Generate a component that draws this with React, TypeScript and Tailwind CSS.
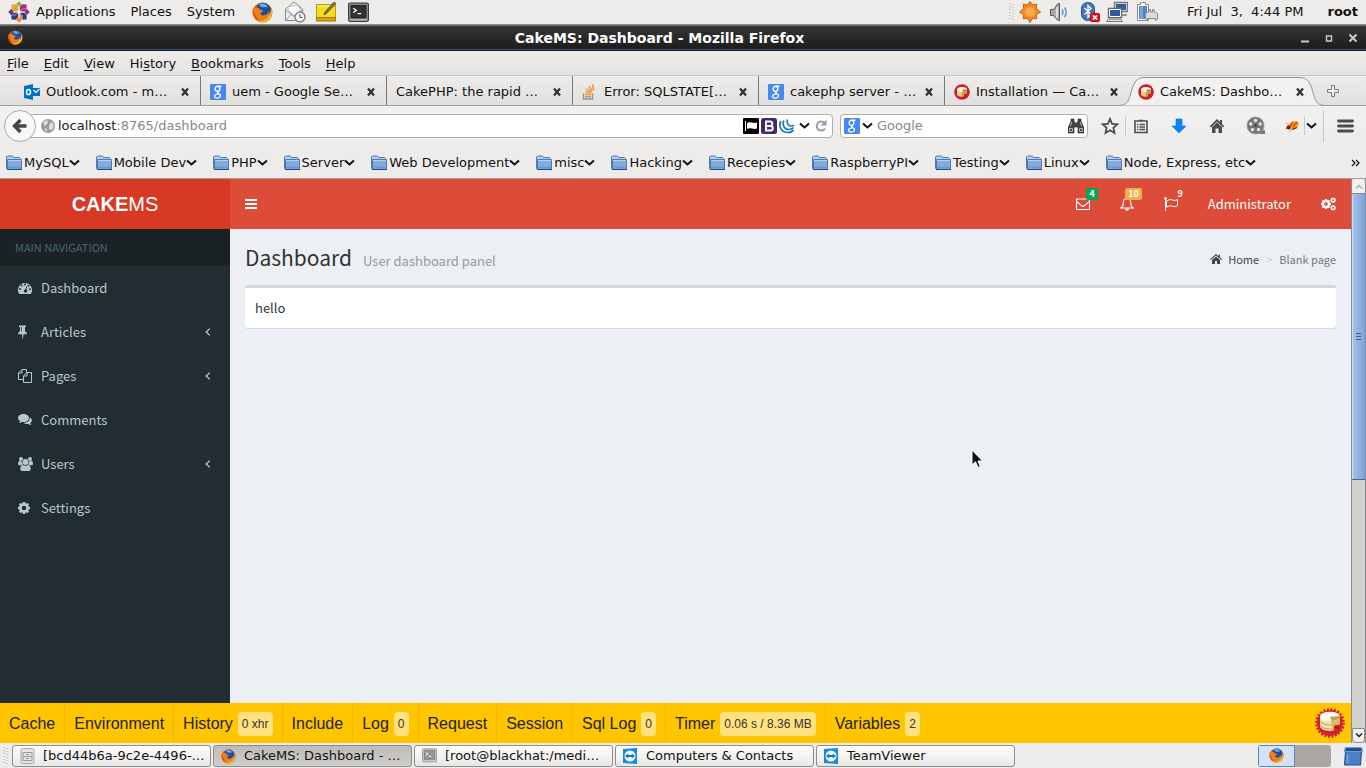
import React from "react";

type Kids = { children?: React.ReactNode };

/* ---------- shared drawings ---------- */

function Firefox({ className = "size-4" }: { className?: string }) {
  return (
    <svg viewBox="0 0 20 20" className={className} aria-hidden="true">
      <circle cx="10" cy="10" r="9.5" fill="#e2570f" />
      <path d="M10 .8c4 0 7.6 3 8 7.6.2 3-1.2 6-3.6 7.4C11 17.6 6 15 4.500 12 3 7 5 1 10 .8z" fill="#1d4f9e" />
      <path d="M7 2c3-1.500 7 0 8 3-2-1-3 .5-5 0-1.500-.4-3-1-3-3z" fill="#5fb2ea" />
      <path d="M1.200 5c.8 1 1.800.8 2.800.5C6.200 5 7.800 6 7.200 7.500 9 7.400 10.600 8 10.300 9c-.6 1-2.300 1.100-2.600 2 .6 1.600 3 2.200 4.800 1.500 2-.6 3.500-2.300 3.500-4 2 3.500-.5 9-6 9.500C4 18.500.3 14 .5 9.500.5 7.500.8 6 1.200 5z" fill="#f0801a" />
      <path d="M18.200 5.500c2.200 5-.2 11-5 13-3 1.300-7 .8-9-1 4 1.300 8.500.5 11-3 2-2.500 3-5.500 3-9z" fill="#fbc21f" />
      <path d="M1.500 6.500c0 5 2 8.500 5.500 10.500-4-.7-6.500-5-5.500-10.500z" fill="#b5320e" />
    </svg>
  );
}

function Google() {
  return (
    <svg viewBox="0 0 16 16" className="size-4 shrink-0" aria-hidden="true">
      <rect width="16" height="16" rx="1" fill="#4787f0" />
      <g fill="none" stroke="#fff" strokeWidth="1.400">
        <ellipse cx="7.500" cy="4.800" rx="2.300" ry="2.600" />
        <path d="M8 2.300h3.500M8.500 7.300C6 9 9 9.200 10 10.500c1.200 1.700 0 3.600-2.500 3.600-2.600 0-3.600-1.500-2.600-2.900.7-1 2.300-1.300 3.800-1.300" />
      </g>
    </svg>
  );
}

function Cake({ className = "size-4", scalloped = false }: { className?: string; scalloped?: boolean }) {
  if (!scalloped) {
    return (
      <svg viewBox="0 0 16 16" className={className} aria-hidden="true">
        <circle cx="8" cy="8" r="7.800" fill="#c9202f" />
        <path d="M3 5.500v5c1 1.800 3 2.500 5.500 2.300V7.500z" fill="#e6cb83" />
        <path d="M8.500 7.500v5.300l1.500-.3v-2.200l3-.8v-4z" fill="#c79c45" />
        <ellipse cx="8" cy="5.500" rx="5" ry="2.500" fill="#fff8dc" />
        <path d="M8 5.700l5-.3v1.500L9.500 8z" fill="#b8862f" />
      </svg>
    );
  }
  return (
    <svg viewBox="0 0 30 30" className={className} aria-hidden="true">
      <circle cx="15" cy="15" r="13" fill="#cf2231" />
      <circle cx="15" cy="15" r="13.500" fill="none" stroke="#cf2231" strokeWidth="2.600" strokeDasharray="2 1.530" />
      <path d="M5 8.500v10c1 3 6 4.800 12 4.300v-9z" fill="#f4e3a8" />
      <path d="M17 13v9.800l2-.3v-5l6-1V8.500z" fill="#d9b964" />
      <path d="M5 13c2 3 6 4.200 12 4M5 17c2 3 6 4.200 12 4" stroke="#c29b45" fill="none" />
      <path d="M19 19.500l5-1.500v3z" fill="#a51623" />
      <ellipse cx="15" cy="8.500" rx="10" ry="4.800" fill="#fffdf2" />
      <path d="M15 8.800l10-.8v2.500L17 13.500z" fill="#c9a04a" />
    </svg>
  );
}

function Chevron() {
  return (
    <svg viewBox="0 0 11 8" className="h-2 w-[11px] shrink-0" aria-hidden="true">
      <path d="M1 1.500l4.500 4 4.500-4" fill="none" stroke="#111" strokeWidth="2" />
    </svg>
  );
}

function Folder() {
  return (
    <svg viewBox="0 0 16 16" className="size-4 shrink-0" aria-hidden="true">
      <path d="M.5 13.500V2L1.500 1h5l1 1.500h6l1 1v10z" fill="#b5cfec" stroke="#4b7ab5" />
      <path d="M1.500 14.500v-10h14v10z" fill="#82acdd" stroke="#4b7ab5" />
      <path d="M2 5.500h13" stroke="#b9d1ee" />
      <path d="M2 12.500h13" stroke="#6c9bd1" strokeWidth="2" />
      <path d="M1 14.500h15" stroke="#204a87" />
    </svg>
  );
}

function Terminal({ className = "size-5", light = false }: { className?: string; light?: boolean }) {
  return (
    <svg viewBox="0 0 20 20" className={className} aria-hidden="true">
      <rect x=".5" y="1" width="19" height="17.500" rx="1.500" fill={light ? "#c9c9c6" : "#888a85"} stroke={light ? "#858585" : "#3b3d3a"} />
      <rect x="3" y="3.500" width="14" height="11.500" fill={light ? "#959795" : "#303331"} stroke={light ? "#777" : "#1c1e1c"} />
      <path d="M5 6l3 2-3 2M9 11h3.500" fill="none" stroke="#fff" strokeWidth="1.200" />
      <path d="M2 17h16" stroke="#ccc" />
    </svg>
  );
}

function Grip() {
  return (
    <svg viewBox="0 0 6 18" className="h-[18px] w-1.5 shrink-0" aria-hidden="true">
      <path d="M1 0v18M4 1v17" stroke="#aaa8a5" strokeWidth="1" strokeDasharray="1 2" />
    </svg>
  );
}

/* ---------- desktop panel ---------- */

function PanelLogo() {
  const petals = [0, 45, 90, 135, 180, 225, 270, 315];
  const colors = ["#8db73b", "#9b2d84", "#9b2d84", "#24407f", "#f08a24", "#24407f", "#5b3b8f", "#e7a51f"];
  return (
    <svg viewBox="0 0 22 22" className="size-[22px]" aria-hidden="true">
      {petals.map((a, i) => (
        <path key={a} d="M11 0l3.200 3v4.500L11 9.800 7.800 7.500V3z" fill={colors[i]} stroke="#fff" strokeWidth=".4" transform={`rotate(${a} 11 11)`} />
      ))}
      <path d="M11 5v12M5 11h12" stroke="#fff" strokeWidth="1" />
    </svg>
  );
}

function DesktopPanel() {
  return (
    <header className="flex h-[25px] shrink-0 items-center border-b border-[#8d8b87] bg-[#edeceb] px-2 text-[13px] leading-6">
      <nav className="flex items-center" aria-label="Desktop">
        <PanelLogo />
        <div className="ml-1.5 flex gap-[15px]">
          <button>Applications</button>
          <button>Places</button>
          <button>System</button>
        </div>
      </nav>
      <div className="ml-[17px] flex items-center gap-[11px]">
        <button aria-label="Firefox"><Firefox className="size-[21px]" /></button>
        <button aria-label="Mail">
          <svg viewBox="0 0 22 22" className="size-[22px]">
            <path d="M1.500 8L10 1l8.500 7v11.500h-17z" fill="#eee" stroke="#888a85" />
            <path d="M4 9V6l9-2 3 3v4l-6 4z" fill="#fff" stroke="#babdb6" />
            <path d="M1.500 19.500l6-6.500M1.500 8.500l8 7 9-7" fill="none" stroke="#999" />
            <circle cx="16" cy="16" r="5" fill="#f4f0f6" stroke="#8d7b9b" strokeWidth="1.500" />
            <path d="M16 13v3.500h2.500" fill="none" stroke="#555" />
          </svg>
        </button>
        <button aria-label="Notes" className="-ml-0.5">
          <svg viewBox="0 0 22 22" className="size-[22px]">
            <path d="M1.500 3.500h19v16h-19z" fill="#f5dc24" stroke="#c49b06" />
            <path d="M1.500 16.500h19v3.500h-19z" fill="#d8a70a" stroke="#a57706" />
            <path d="M3 5h16" stroke="#fff08a" />
            <path d="M9 14l1-3 9-10 2 1.500-9 9.500z" fill="#7d7544" stroke="#46401d" strokeWidth=".7" />
          </svg>
        </button>
        <button aria-label="Terminal"><Terminal className="size-[21px]" /></button>
      </div>
      <div className="ml-auto flex items-center">
        <Grip />
        <svg viewBox="0 0 22 22" className="ml-1 size-[22px]" aria-label="Updates">
          <path d="M11 .5l2.600 3.300 4.200-.6-.6 4.200L21.500 11l-4.300 2.600.6 4.200-4.200-.6L11 21.500l-2.600-4.300-4.200.6.6-4.200L.5 11l4.300-3.600-.6-4.200 4.200.6z" fill="#f28b1f" stroke="#cf5e06" />
          <circle cx="11" cy="11" r="5" fill="#f9a94a" />
        </svg>
        <svg viewBox="0 0 20 20" className="ml-2 size-5" aria-label="Volume">
          <path d="M1.500 7.500h3l4.500-6h1.500v17H9l-4.500-5h-3z" fill="#a9aba8" stroke="#555753" />
          <path d="M8 5v11" stroke="#eee" strokeWidth="1.500" />
          <path d="M13 7.500q2 2.500 0 5.500M15.500 5.500q3.500 4.500 0 9.500" fill="none" stroke="#6f93c4" strokeWidth="1.500" />
        </svg>
        <svg viewBox="0 0 20 20" className="ml-[11px] size-5" aria-label="Bluetooth">
          <rect x="1.500" y=".5" width="13" height="18" rx="6" fill="#4676b5" stroke="#27548f" />
          <path d="M4.500 6l6.500 6.500-3 3v-12l3 3-6.500 6" fill="none" stroke="#fff" strokeWidth="1.300" />
          <rect x="10.500" y="11.500" width="9" height="8" rx="1" fill="#e01b24" stroke="#b40808" />
          <path d="M13 13.500l4 4M17 13.500l-4 4" stroke="#fff" strokeWidth="1.700" />
        </svg>
        <svg viewBox="0 0 22 22" className="ml-1.5 size-[22px]" aria-label="Network">
          <path d="M8.500 1.500h13v9h-13zM12 14h9M15 11v3" fill="#315da0" stroke="#777974" strokeWidth="1.400" />
          <path d="M9.500 2.500h11v7h-11z" fill="#315da0" stroke="#fff" strokeWidth=".7" />
          <path d="M2.500 7.500h13v9h-13z" fill="#315da0" stroke="#666863" strokeWidth="1.400" />
          <path d="M3.500 8.500h11v7h-11z" fill="#315da0" stroke="#fff" />
          <path d="M.5 20.500h16l-2-2.500h-12z" fill="#ddd" stroke="#777" />
        </svg>
        <svg viewBox="0 0 22 22" className="ml-2 size-[22px]" aria-label="Battery">
          <path d="M1.500 3.500h3v-2h5v2h3v16h-11z" fill="#fff" stroke="#888a85" />
          <path d="M3 5h8v13H3z" fill="#4e83c6" />
          <path d="M4 5h3v13H4z" fill="#78a6df" />
          <path d="M9.500 18v-5l2-2h1.500V8.500h1.500V11h2V8.500H18V11h1.500l2 2v5l-2 1.500v-2h-8v2z" fill="#ddd" stroke="#858785" />
        </svg>
        <time className="ml-[29px] whitespace-pre">Fri Jul  3,  4:44 PM</time>
        <button className="ml-6 font-bold">root</button>
      </div>
    </header>
  );
}

/* ---------- browser chrome ---------- */

function TitleBar() {
  return (
    <div className="flex h-[26px] shrink-0 items-center border-b border-[#101722] bg-linear-to-b from-[#373737] to-[#1c1c1c] pr-2 pl-2 text-white shadow-[inset_0_1px_0_#6b6b6b,inset_0_-1px_0_#41597a]">
      <Firefox className="size-[15px]" />
      <h1 className="flex-1 pr-1 text-center text-[14px] leading-6 font-bold">CakeMS: Dashboard - Mozilla Firefox</h1>
      <div className="flex gap-[14px]">
        <button aria-label="Minimize" className="size-2.5">
          <svg viewBox="0 0 10 10"><path d="M1 8.500h8" stroke="#ccc" strokeWidth="2" /></svg>
        </button>
        <button aria-label="Maximize" className="size-2.5">
          <svg viewBox="0 0 10 10"><path d="M2.500 3h5v5h-5zM2 3h6" fill="none" stroke="#ccc" strokeWidth="1.400" /></svg>
        </button>
        <button aria-label="Close" className="size-2.5">
          <svg viewBox="0 0 10 10"><path d="M1.500 1.500l7 7M8.500 1.500l-7 7" stroke="#ccc" strokeWidth="2" /></svg>
        </button>
      </div>
    </div>
  );
}

const menus = [
  ["", "F", "ile"],
  ["", "E", "dit"],
  ["", "V", "iew"],
  ["Hi", "s", "tory"],
  ["", "B", "ookmarks"],
  ["", "T", "ools"],
  ["", "H", "elp"],
];

function MenuBar() {
  return (
    <nav aria-label="Menu" className="flex h-[25px] shrink-0 items-center gap-[15px] border-b border-[#c6c5c3] bg-linear-to-b from-[#eeedec] to-[#e4e3e1] pt-px pl-[7px] text-[13px] leading-6">
      {menus.map(([a, b, c]) => (
        <button key={b}>{a}<span className="underline underline-offset-2">{b}</span>{c}</button>
      ))}
    </nav>
  );
}

function Outlook() {
  return (
    <svg viewBox="0 0 16 16" className="size-4 shrink-0" aria-hidden="true">
      <path d="M8 4h8v8H8z" fill="#0072c6" />
      <path d="M9.500 6l2.500 2.500L15.500 5" fill="none" stroke="#fff" strokeWidth="1.200" />
      <path d="M0 2l9-2v16l-9-2z" fill="#0072c6" />
      <ellipse cx="4.500" cy="8" rx="2" ry="2.600" fill="none" stroke="#fff" strokeWidth="1.500" />
    </svg>
  );
}

function StackOverflow() {
  return (
    <svg viewBox="0 0 16 16" className="size-4 shrink-0" aria-hidden="true">
      <path d="M1.500 9.500v5.500h9V9.500" fill="none" stroke="#919497" strokeWidth="1.400" />
      <path d="M3 12.800h6" stroke="#919497" strokeWidth="1.300" />
      <path d="M3 10.300l6 .6M3.300 7.600l5.800 1.600M4.500 4.900l5 3M7 2.300l3.500 4.600M10.500.5l1.200 5.700" stroke="#f08a24" strokeWidth="1.400" />
    </svg>
  );
}

function CloseMark() {
  return (
    <svg viewBox="0 0 10 10" className="size-[10px]" aria-hidden="true">
      <path d="M2 1.500l6 7M8 1.500l-6 7" stroke="#333" strokeWidth="2.300" />
    </svg>
  );
}

const tabs: { title: string; icon?: React.ReactNode }[] = [
  { title: "Outlook.com - m…", icon: <Outlook /> },
  { title: "uem - Google Se…", icon: <Google /> },
  { title: "CakePHP: the rapid …" },
  { title: "Error: SQLSTATE[…", icon: <StackOverflow /> },
  { title: "cakephp server - …", icon: <Google /> },
  { title: "Installation — Ca…", icon: <Cake className="size-4 shrink-0" /> },
];

function TabBar() {
  return (
    <div className="flex h-[30px] shrink-0 border-b border-[#a3a19e] bg-linear-to-b from-[#eeedec] to-[#e1e0de] pl-[15px] text-[13px] leading-5">
      {tabs.map((t, i) => (
        <div key={t.title} className={`flex w-[186px] items-center gap-1.5 pt-0.5 pl-[9px] ${i < 5 ? "border-r border-[#777] pr-[10px]" : "pr-3"}`}>
          {t.icon}
          <button className="flex-1 text-left whitespace-nowrap">{t.title}</button>
          <button aria-label={`Close ${t.title}`}><CloseMark /></button>
        </div>
      ))}
      <div className="relative -mr-2 -mb-px -ml-3 flex w-[206px] items-center">
        <svg viewBox="0 0 206 30" preserveAspectRatio="none" className="absolute inset-0 size-full" aria-hidden="true">
          <path d="M0 29.500c9 0 10-6 12-13C15 6 17 1.500 26 1.500h154c9 0 11 4.500 14 15 2 7 3 13 12 13" fill="#f2f1f0" stroke="#97958f" />
        </svg>
        <div className="relative flex w-full items-center gap-1.5 pt-px pr-5 pl-[19px]">
          <Cake className="size-4 shrink-0" />
          <button className="flex-1 text-left whitespace-nowrap">CakeMS: Dashbo…</button>
          <button aria-label="Close CakeMS: Dashboard"><CloseMark /></button>
        </div>
      </div>
      <button aria-label="New tab" className="ml-2.5 self-center">
        <svg viewBox="0 0 12 12" className="size-3"><path d="M4.500.5h3v4h4v3h-4v4h-3v-4h-4v-3h4z" fill="#eee" stroke="#777" /></svg>
      </button>
    </div>
  );
}

function NavBar() {
  return (
    <div className="flex h-10 shrink-0 items-center bg-linear-to-b from-[#f2f1f0] to-[#edeceb] pr-3 pl-1 text-[13px]">
      <button aria-label="Back" className="z-10 flex size-8 shrink-0 items-center justify-center rounded-full border border-[#a5a9ae] bg-[#f8f8f8]">
        <svg viewBox="0 0 16 16" className="size-4"><path d="M14.500 8H4M8.500 2L2.500 8l6 6" fill="none" stroke="#444" strokeWidth="3.400" /></svg>
      </button>
      <div className="-ml-3 flex h-6 min-w-0 flex-1 items-center rounded-r-sm border border-[#b1afac] bg-white pr-1 pl-4">
        <svg viewBox="0 0 14 14" className="size-[14px] shrink-0" aria-hidden="true">
          <circle cx="7" cy="7" r="7" fill="#9b9b9b" />
          <path d="M2 3l4-2 1 3-3 3zM8 6l3-3 2 4-2 4-3-1zM3 9l3 1v3z" fill="#dedede" />
        </svg>
        <div className="relative ml-[3px] min-w-0 flex-1 leading-6">
          <input aria-label="Address" defaultValue="localhost:8765/dashboard" className="w-full bg-transparent text-transparent outline-none" />
          <span aria-hidden="true" className="pointer-events-none absolute inset-0 text-[#888]"><span className="text-[#222]">localhost</span>:8765/dashboard</span>
        </div>
        <svg viewBox="0 0 16 16" className="size-4 shrink-0" aria-hidden="true">
          <rect width="16" height="16" rx="1" fill="#000" />
          <path d="M2.500 3v10" stroke="#fff" />
          <path d="M4 5c3-2 6 1 10-.500v6c-4 1.500-7-1.500-10 .5z" fill="#fff" />
        </svg>
        <svg viewBox="0 0 16 16" className="ml-0.5 size-4 shrink-0" aria-hidden="true">
          <rect width="16" height="16" rx="2.500" fill="#412a66" />
          <path d="M5 3.500h4q2.300 0 2.300 2.200T9 7.900H5zM5 7.900h4.300q2.500 0 2.500 2.300T9.300 12.500H5zM5 3v10" fill="none" stroke="#fff" strokeWidth="2" />
        </svg>
        <svg viewBox="0 0 16 16" className="ml-0.5 size-4 shrink-0" aria-hidden="true">
          <path d="M2 3C-1 8 2.500 14.500 8.500 14.500c3 0 5-1 6-2.500M5 2.500C3 6 5 11.500 9.500 11.500c2.500 0 4-.8 5-2M8.500 1.500c-1 3 .5 6.300 3.500 6.500 1.500.1 2.500-.5 3-1" fill="none" stroke="#1c76bd" strokeWidth="1.700" />
        </svg>
        <button aria-label="More site tools" className="ml-1"><Chevron /></button>
        <button aria-label="Reload" className="ml-1">
          <svg viewBox="0 0 14 14" className="size-[14px]">
            <path d="M11 9.500A4.500 4.500 0 1 1 10.500 4" fill="none" stroke="#919da8" strokeWidth="2" />
            <path d="M12.500.5v6h-6z" fill="#919da8" />
          </svg>
        </button>
      </div>
      <div className="ml-[7px] flex h-6 w-[248px] shrink-0 items-center rounded-sm border border-[#b1afac] bg-white px-[3px]">
        <Google />
        <button aria-label="Choose search engine" className="ml-0.5"><Chevron /></button>
        <input aria-label="Search" placeholder="Google" className="ml-1 min-w-0 flex-1 bg-transparent leading-6 outline-none placeholder:text-[#888]" />
        <svg viewBox="0 0 16 16" className="size-4 shrink-0" aria-hidden="true">
          <path d="M3 1h3v2l1 2h2l1-2V1h3v2l3 7v5h-6V9H6v6H0v-5l3-7z" fill="#444" stroke="#222" strokeWidth=".6" />
          <path d="M1.500 10.500h3v3h-3zM11.500 10.500h3v3h-3zM3.500 4l-1 4M12.500 4l1 4" stroke="#bbb" fill="none" />
        </svg>
      </div>
      <div className="ml-[13px] flex shrink-0 items-center">
        <button aria-label="Bookmark this page">
          <svg viewBox="0 0 18 18" className="size-[18px]"><path d="M9 2l2.100 4.800 5.200.5-3.900 3.500 1.100 5.200L9 13.300 4.500 16l1.100-5.200-3.900-3.500 5.200-.5z" fill="none" stroke="#4c4c4c" strokeWidth="1.800" /></svg>
        </button>
        <span className="ml-1.5 h-[18px] w-px bg-[#c4c8cc]" />
        <button aria-label="Bookmarks menu" className="ml-[7px]">
          <svg viewBox="0 0 16 16" className="size-4"><path d="M2 3h12v11.500H2zM6 2.500h4M6.500 6.500H12M6.500 9H12M6.500 11.500H12M4 6.500h1.300M4 9h1.300M4 11.500h1.300" fill="none" stroke="#4c4c4c" strokeWidth="1.600" /></svg>
        </button>
        <button aria-label="Downloads" className="ml-[22px]">
          <svg viewBox="0 0 16 16" className="size-4"><path d="M5 1h6v7h4l-7 7-7-7h4z" fill="#0a84ff" stroke="#0874df" strokeWidth=".6" /></svg>
        </button>
        <button aria-label="Home" className="ml-[22px]">
          <svg viewBox="0 0 16 16" className="size-4"><path d="M8 1L.8 8.200 2 9.400l6-6 6 6 1.200-1.200-2.200-2.200V2h-2v2z" fill="#4c4c4c" /><path d="M3 9.300l5-5 5 5V15h-3.500v-4.500h-3V15H3z" fill="#4c4c4c" /></svg>
        </button>
        <button aria-label="Video" className="ml-[21px]">
          <svg viewBox="0 0 20 20" className="size-5">
            <path d="M11 18l4-4 4 .5V18z" fill="#777" />
            <circle cx="9.500" cy="9.500" r="8.500" fill="#777" stroke="#999" />
            <g fill="#e0e0e0" stroke="#444" strokeWidth=".5"><circle cx="9.500" cy="4.500" r="2.200" /><circle cx="14.200" cy="8" r="2.200" /><circle cx="12.500" cy="13.600" r="2.200" /><circle cx="6.500" cy="13.600" r="2.200" /><circle cx="4.800" cy="8" r="2.200" /></g>
            <circle cx="9.500" cy="9.500" r="1.200" fill="#333" />
          </svg>
        </button>
        <button aria-label="Firebug" className="ml-[18px]">
          <svg viewBox="0 0 16 14" className="h-[14px] w-4">
            <path d="M2 4l3 2M1 10l4-1M6 13l1-3M9 2L7 5" stroke="#d0a16a" />
            <ellipse cx="9.500" cy="6" rx="5.500" ry="3.500" fill="#f39c12" transform="rotate(-22 9.500 6)" />
            <path d="M6 8l3-5M9 8l4-5" stroke="#d2460b" strokeWidth="1.300" />
            <circle cx="4.500" cy="8.500" r="2" fill="#6b1e08" />
            <path d="M8 10.500l5-2" stroke="#5b2208" strokeWidth="1.200" />
          </svg>
        </button>
        <span className="ml-1 h-[18px] w-px bg-[#c4c8cc]" />
        <button aria-label="Firebug options" className="ml-px"><Chevron /></button>
        <span className="ml-1.5 h-8 w-px bg-[#c4c8cc]" />
        <button aria-label="Open menu" className="ml-[13px]">
          <svg viewBox="0 0 17 14" className="h-[14px] w-[17px]"><path d="M1.500 2h14M1.500 7h14M1.500 12h14" stroke="#4c4c4c" strokeWidth="2.800" strokeLinecap="round" /></svg>
        </button>
      </div>
    </div>
  );
}

const bookmarks = ["MySQL", "Mobile Dev", "PHP", "Server", "Web Development", "misc", "Hacking", "Recepies", "RaspberryPI", "Testing", "Linux", "Node, Express, etc"];

function BookmarkBar() {
  return (
    <nav aria-label="Bookmarks" className="flex h-[33px] shrink-0 items-center gap-4 border-b border-[#a09e9b] bg-[#edeceb] pt-px pr-1.5 pl-1.5 text-[13px] leading-5">
      {bookmarks.map((b) => (
        <button key={b} className="flex items-center whitespace-nowrap">
          <Folder />
          <span className="ml-0.5">{b}</span>
          <Chevron />
        </button>
      ))}
      <button aria-label="More bookmarks" className="ml-auto">
        <svg viewBox="0 0 9 8" className="h-2 w-[9px]"><path d="M1 1l3 3-3 3M5 1l3 3-3 3" fill="none" stroke="#111" strokeWidth="1.200" /></svg>
      </button>
    </nav>
  );
}

/* ---------- dashboard page ---------- */

function Glyph({ w = 14, children }: Kids & { w?: number }) {
  return (
    <svg viewBox={`0 0 ${w} 14`} style={{ width: w }} className="h-[14px] shrink-0" fill="currentColor" aria-hidden="true">
      {children}
    </svg>
  );
}

function Gear({ cx, cy, r }: { cx: number; cy: number; r: number }) {
  const teeth = [0, 45, 90, 135];
  return (
    <g stroke="currentColor" fill="none">
      <circle cx={cx} cy={cy} r={r * 0.6} strokeWidth={r * 0.46} />
      {teeth.map((a) => (
        <path
          key={a}
          d={`M${cx} ${cy - r}V${cy - r * 0.6}M${cx} ${cy + r * 0.6}V${cy + r}`}
          strokeWidth={r * 0.42}
          transform={`rotate(${a} ${cx} ${cy})`}
        />
      ))}
    </g>
  );
}

const navItems: { label: string; icon: React.ReactNode; open?: boolean }[] = [
  {
    label: "Dashboard",
    icon: (
      <Glyph>
        <path fillRule="evenodd" d="M7 2a7 7 0 0 0-5.900 10.800q.2.300.5.300h10.800q.3 0 .5-.3A7 7 0 0 0 7 2zM3 8a1 1 0 1 1-2 0 1 1 0 0 1 2 0zm1.500-3.500a1 1 0 1 1-2 0 1 1 0 0 1 2 0zM8 3.500a1 1 0 1 1-2 0 1 1 0 0 1 2 0zm3.500 1.200a1 1 0 1 1-2 0 1 1 0 0 1 2 0zM13 8.300a1 1 0 1 1-2 0 1 1 0 0 1 2 0zM8.500 5.200l.6.200-.8 3.200a1.600 1.600 0 1 1-1-.2z" />
      </Glyph>
    ),
  },
  {
    label: "Articles",
    open: true,
    icon: (
      <Glyph>
        <path fillRule="evenodd" d="M1 .5h7V2H7v4q2 1.300 2 3.200H5.500l-.6 4.800h-.4l-.5-4.800H0Q0 7.300 2 6V2H1zM3 2.200v4h.8v-4z" />
      </Glyph>
    ),
  },
  {
    label: "Pages",
    open: true,
    icon: (
      <Glyph>
        <path d="M5 10.500H.5V4L4 .5h4.500V3.500M4 .5V4H.5M5.500 6.800L9 3.500h4.500v10h-8zM9 3.500V7H5.500" fill="none" stroke="currentColor" />
      </Glyph>
    ),
  },
  {
    label: "Comments",
    icon: (
      <Glyph>
        <path d="M5.500 1C8.700 1 11 2.800 11 5S8.700 9 5.500 9q-.8 0-1.500-.1Q2.700 10 1 10q.9-.8 1-1.900Q0 7 0 5c0-2.200 2.300-4 5.500-4z" />
        <path d="M11.800 4.200C14.300 5.700 14.700 8.200 12.300 9.900q.1 1.100 1 2-1.800 0-3-1-2.800.4-5-1C9 9.900 12 8 11.800 4.200z" />
      </Glyph>
    ),
  },
  {
    label: "Users",
    open: true,
    icon: (
      <Glyph w={15}>
        <circle cx="3" cy="2" r="2" /><circle cx="12" cy="2" r="2" /><circle cx="7.500" cy="5" r="2.900" />
        <path d="M1.400 3.800q2 1 2.800.4-.2 2 .8 3.300-1.500 0-2.200.8H1.400Q0 8.300 0 7q0-3 1.400-3.200zM13.600 3.800q-2 1-2.800.4.2 2-.8 3.300 1.500 0 2.200.8h1.400Q15 8.300 15 7q0-3-1.400-3.200zM4.500 7.700q3 2.200 6 0 2.200.5 2.200 4.500 0 1.800-1.800 1.800H4.100q-1.800 0-1.800-1.800 0-4 2.200-4.500z" />
      </Glyph>
    ),
  },
  { label: "Settings", icon: <Glyph><Gear cx={6} cy={7} r={6} /></Glyph> },
];

function Sidebar() {
  return (
    <aside className="w-[230px] shrink-0 bg-[#222d32]">
      <h2 className="h-[37px] bg-[#1a2226] pl-[15px] text-[11px] leading-[37px] text-[#4b646f]">MAIN NAVIGATION</h2>
      <nav aria-label="Main navigation">
        {navItems.map((n) => (
          <a key={n.label} href="#" className="flex h-11 items-center pr-[19px] pl-[18px] text-[13px] text-[#b8c7ce]">
            <span className="flex w-[23px]">{n.icon}</span>
            <span className="flex-1">{n.label}</span>
            {n.open && (
              <svg viewBox="0 0 6 8" className="h-2 w-1.5" aria-hidden="true"><path d="M4.800.6L1.200 4l3.600 3.400" fill="none" stroke="currentColor" strokeWidth="1.300" /></svg>
            )}
          </a>
        ))}
      </nav>
    </aside>
  );
}

function Alert({ label, count, tone, children }: Kids & { label: string; count: string; tone: string }) {
  return (
    <button aria-label={label} className="relative flex h-full w-11 items-center justify-center">
      {children}
      <span className={`absolute top-[9px] right-[7px] rounded-xs px-[3px] text-[9px] leading-[12px] font-bold text-white ${tone}`}>{count}</span>
    </button>
  );
}

function AppHeader() {
  return (
    <div className="flex h-[50px] shrink-0 bg-[#dd4b39] text-white">
      <a href="#" className="w-[230px] shrink-0 bg-[#d73925] text-center font-[family-name:Liberation_Sans,sans-serif] text-[20px] leading-[50px]"><b>CAKE</b>MS</a>
      <button aria-label="Toggle navigation" className="pl-[15px]">
        <svg viewBox="0 0 12 10" className="h-2.5 w-3"><path d="M0 1h12M0 5h12M0 9h12" stroke="#fff" strokeWidth="2" /></svg>
      </button>
      <div className="ml-auto flex items-center pr-[15px] text-[13px]">
        <Alert label="Messages" count="4" tone="bg-[#00a65a]">
          <Glyph><path d="M.5 2h13v10.500H.5zM.5 4.500L6 9q1 .8 2 0l5.500-4.500" fill="none" stroke="currentColor" strokeWidth="1.100" /></Glyph>
        </Alert>
        <Alert label="Notifications" count="10" tone="bg-[#f0ad4e]">
          <Glyph><path d="M7 1.500c-2.600 0-3.700 1.700-3.700 4 0 3-1 4.500-2.500 5.500h12.400c-1.500-1-2.500-2.500-2.500-5.500 0-2.300-1.100-4-3.700-4zM7 0v1.500" fill="none" stroke="currentColor" strokeWidth="1.100" /><path d="M5 11.500h4q-.2 2.200-2 2.200t-2-2.200z" /></Glyph>
        </Alert>
        <Alert label="Tasks" count="9" tone="">
          <Glyph><path d="M1.500 1v13" stroke="currentColor" /><path d="M2.500 4C6 2 7.500 2.500 9 3.200c1.500.6 3 .1 4.500-.7v6.200c-1.500.8-3 1.300-4.500.7-1.500-.7-3-1.200-6.500.8z" fill="none" stroke="currentColor" /><circle cx="1.500" cy="1.500" r="1.300" /></Glyph>
        </Alert>
        <button className="ml-[15px]">Administrator</button>
        <button aria-label="Control panel" className="ml-[30px]">
          <Glyph w={15}>
            <Gear cx={5} cy={7} r={5} />
            <Gear cx={12.200} cy={3.200} r={2.800} />
            <Gear cx={12.200} cy={10.800} r={2.800} />
          </Glyph>
        </button>
      </div>
    </div>
  );
}

function MainContent() {
  return (
    <main className="relative min-w-0 flex-1 bg-[#ecf0f5] px-[15px] text-[#333]">
      <div className="flex h-14 items-center justify-between">
        <h2 className="flex items-baseline gap-[11px] text-[21px] leading-7">
          Dashboard <small className="text-[13px] leading-none text-[#999]">User dashboard panel</small>
        </h2>
        <nav aria-label="Breadcrumb" className="flex items-center pt-1 text-[11px] leading-6 text-[#777]">
          <svg viewBox="0 0 12 10" className="mr-1.5 h-2.5 w-3" fill="#444" aria-hidden="true">
            <path d="M6 0l2.500 2.200V.8H10v2.700l2 1.700-.7.8L6 1.500.7 6 0 5.200z" /><path d="M6 2.500L10 6v4H7V7H5v3H2V6z" />
          </svg>
          <a href="#" className="text-[#444]">Home</a>
          <span className="px-[7px] text-[#ccc]">&gt;</span>
          <span>Blank page</span>
        </nav>
      </div>
      <section className="rounded-[3px] border-t-[3px] border-[#d2d6de] bg-white p-2.5 text-[13px] leading-5 shadow-[0_1px_1px_rgba(0,0,0,0.1)]">hello</section>
      <svg viewBox="0 0 12 20" className="pointer-events-none absolute top-[220px] left-[741px] h-5 w-3" aria-hidden="true">
        <path d="M1 1v15l3.500-3.200L7 18.500l2.300-1L7 12h4.500z" fill="#111" stroke="#fff" />
      </svg>
    </main>
  );
}

const debugItems: [string, string?][] = [
  ["Cache"], ["Environment"], ["History", "0 xhr"], ["Include"], ["Log", "0"], ["Request"], ["Session"], ["Sql Log", "0"], ["Timer", "0.06 s / 8.36 MB"], ["Variables", "2"],
];

function DebugBar() {
  return (
    <div className="flex h-10 shrink-0 items-center bg-[#ffc600] pr-1.5 font-[family-name:Liberation_Sans,sans-serif] text-[16px] text-[#222]">
      {debugItems.map(([name, value], i) => (
        <button key={name} className={`flex h-full items-center gap-[5px] px-[9px] pt-0.5 whitespace-nowrap ${i < 9 ? "border-r border-[#f6b700]" : ""}`}>
          {name}
          {value && <span className="rounded bg-[#ffe180] px-1 text-[12px] leading-6 text-[#333]">{value}</span>}
        </button>
      ))}
      <button aria-label="Close toolbar" className="ml-auto"><Cake className="size-[30px]" scalloped /></button>
    </div>
  );
}

function ScrollBar() {
  return (
    <div aria-hidden="true" className="flex w-[15px] shrink-0 flex-col border-x border-[#8c8b89] bg-[#d3d1cf]">
      <div className="flex h-[15px] shrink-0 items-center justify-center rounded-t-sm border-b border-[#8c8b89] bg-[#f1f0ef]">
        <svg viewBox="0 0 8 5" className="h-[5px] w-2"><path d="M1 4.500l3-3 3 3" fill="none" stroke="#aaa" strokeWidth="1.300" /></svg>
      </div>
      <div className="flex h-[286px] flex-col items-center justify-center gap-0.5 border-b border-[#3d6ca3] bg-linear-to-r from-[#a5c4ea] to-[#79a3d8] shadow-[inset_1px_0_0_#c8dcf3]">
        <i className="h-px w-[5px] bg-[#3b6495]" /><i className="h-px w-[5px] bg-[#3b6495]" /><i className="h-px w-[5px] bg-[#3b6495]" />
      </div>
      <div className="mt-auto flex h-[15px] shrink-0 items-center justify-center rounded-b-sm border border-[#8c8b89] bg-[#f1f0ef]">
        <svg viewBox="0 0 8 5" className="h-[5px] w-2"><path d="M1 .5l3 3 3-3" fill="none" stroke="#222" strokeWidth="1.500" /></svg>
      </div>
    </div>
  );
}

/* ---------- taskbar ---------- */

function TeamViewer() {
  return (
    <svg viewBox="0 0 15 16" className="h-4 w-[15px] shrink-0" aria-hidden="true">
      <path d="M0 1l14-1v16L0 15z" fill="#128be3" />
      <circle cx="7" cy="8" r="5.500" fill="#fff" />
      <path d="M1.800 8l3.500-2.500V7h3.400V5.500L12.200 8l-3.500 2.500V9H5.300v1.500z" fill="#0e79d0" />
    </svg>
  );
}

function FileCabinet() {
  return (
    <svg viewBox="0 0 15 16" className="h-4 w-[15px] shrink-0" aria-hidden="true">
      <rect x="1" y=".5" width="13" height="15" rx="1.500" fill="#e4e4e2" stroke="#aaa" />
      <path d="M3 4.500h9v4H3zM3 8.500h9v4H3zM6 6.500h3M6 10.500h3" fill="none" stroke="#999" />
    </svg>
  );
}

const tasks: { label: string; icon: React.ReactNode; active?: boolean }[] = [
  { label: "[bcd44b6a-9c2e-4496-…", icon: <FileCabinet /> },
  { label: "CakeMS: Dashboard - …", icon: <Firefox className="size-[15px] shrink-0" />, active: true },
  { label: "[root@blackhat:/medi…", icon: <Terminal className="size-[15px] shrink-0" light /> },
  { label: "Computers & Contacts", icon: <TeamViewer /> },
  { label: "TeamViewer", icon: <TeamViewer /> },
];

function TaskBar() {
  return (
    <footer className="flex h-[25px] shrink-0 items-center bg-[#edeceb] pl-[3px] text-[13px] leading-5">
      <Grip />
      <div className="ml-[3px] flex min-w-0 flex-1 gap-0.5">
        {tasks.map((t) => (
          <button
            key={t.label}
            className={`flex h-[22px] w-[199px] items-center gap-2 rounded-[3px] border border-[#8f8d8a] pl-[7px] whitespace-nowrap ${t.active ? "bg-linear-to-b from-[#bebbb8] to-[#cfcdca] pt-px" : "bg-linear-to-b from-white to-[#e8e7e5]"}`}
          >
            {t.icon}
            {t.label}
          </button>
        ))}
      </div>
      <div className="mr-3 flex h-[22px] w-[73px] overflow-hidden rounded-[3px] bg-[#aaa7a4]" aria-label="Workspaces">
        <button aria-label="Workspace 1" className="flex w-[37px] items-center justify-center border border-[#5c86bd] bg-[#d2e2f7]"><Firefox className="size-[15px]" /></button>
        <button aria-label="Workspace 2" className="flex-1" />
      </div>
      <button aria-label="Trash" className="mr-[3px]">
        <svg viewBox="0 0 20 20" className="size-5">
          <path d="M2.500 5.500h16L17.500 19h-16z" fill="#4a80c4" stroke="#204a87" />
          <path d="M2.500 1.500h16l1 4h-18z" fill="#234e8c" stroke="#6f9cd3" strokeWidth="1.200" />
          <path d="M4.500 8v9" stroke="#7ba6dc" strokeWidth="1.500" />
        </svg>
      </button>
    </footer>
  );
}

export default function App() {
  return (
    <div className="flex h-screen flex-col overflow-hidden font-[family-name:DejaVu_Sans,sans-serif] text-[#111]">
      <DesktopPanel />
      <TitleBar />
      <MenuBar />
      <TabBar />
      <NavBar />
      <BookmarkBar />
      <div className="flex min-h-0 flex-1">
        <div className="flex min-w-0 flex-1 flex-col font-[family-name:Noto_Sans_CJK_SC,sans-serif]">
          <AppHeader />
          <div className="flex min-h-0 flex-1">
            <Sidebar />
            <MainContent />
          </div>
          <DebugBar />
        </div>
        <ScrollBar />
      </div>
      <TaskBar />
    </div>
  );
}
